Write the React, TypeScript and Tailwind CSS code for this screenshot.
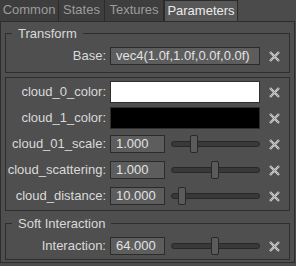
import React from "react";

const Clear = () => (
  <svg width="11" height="11" viewBox="0 0 11 11" className="shrink-0">
    <path d="M1 1L10 10M10 1L1 10" stroke="#cfcfcf" strokeWidth="2.4" />
    <path
      d="M1 1L10 10M10 1L1 10"
      stroke="#7c7c7c"
      strokeWidth="1"
      strokeDasharray="1 1"
    />
  </svg>
);

const Slider = ({ pos }: { pos: number }) => (
  <div className="relative flex items-center w-[89px] h-[18px] ml-[6px]">
    <div className="w-full h-[6px] rounded-[3px] bg-[#393939] border border-[#282828]" />
    <div
      className="absolute top-0 w-[8px] h-[18px] rounded-[2px] bg-[#5b5b5b] border border-[#282828]"
      style={{ left: pos }}
    />
  </div>
);

const Label = ({ text }: { text: string }) => (
  <div className="w-[101px] text-right pr-[1px] mr-[3px] text-[#dadada] whitespace-nowrap">
    {text}
  </div>
);

const ValueRow = ({ label, value, pos }: { label: string; value: string; pos: number }) => (
  <div className="flex items-center h-[22px]">
    <Label text={label} />
    <div className="w-[55px] h-[18px] pl-[5px] leading-[16px] bg-[#5d5d5d] border border-[#2b2b2b] text-[#e2e2e2]">
      {value}
    </div>
    <Slider pos={pos} />
    <div className="ml-[9px]">
      <Clear />
    </div>
  </div>
);

const ColorRow = ({ label, color }: { label: string; color: string }) => (
  <div className="flex items-center h-[22px]">
    <Label text={label} />
    <div className={`w-[150px] h-[22px] border border-[#2e2e2e] ${color}`} />
    <div className="ml-[9px]">
      <Clear />
    </div>
  </div>
);

export default function App() {
  return (
    <div
      className="w-[296px] h-[266px] bg-[#4b4b4b] text-[13px] overflow-hidden"
      style={{ fontFamily: '"Liberation Sans", Arial, sans-serif' }}
    >
      <div className="flex items-end h-[21px]">
        <div className="w-[59px] h-[21px] text-center leading-[20px] bg-[#3e3e3e] border-r border-[#2b2b2b] text-[#9c9c9c]">
          Common
        </div>
        <div className="w-[46px] h-[21px] text-center leading-[20px] bg-[#3e3e3e] border-r border-[#2b2b2b] text-[#9c9c9c]">
          States
        </div>
        <div className="w-[59px] h-[21px] text-center leading-[20px] bg-[#3e3e3e] border-r border-[#2b2b2b] text-[#9c9c9c]">
          Textures
        </div>
        <div className="w-[74px] h-[21px] text-center leading-[20px] bg-[#575757] border-x border-t border-[#2b2b2b] text-[#ececec]">
          Parameters
        </div>
      </div>

      <div className="w-[295px] h-[242px] border border-[#2d2d2d] bg-[#4f4f4f] px-[4px] pt-[4px]">
        <fieldset className="border border-[#2e2e2e] pb-[7px]">
          <legend className="ml-[6px] px-[6px] leading-[15px] text-[#dadada]">Transform</legend>
          <div className="flex items-center h-[18px] mt-[6px]">
            <Label text="Base:" />
            <div className="w-[150px] h-[18px] pl-[5px] leading-[16px] bg-[#5d5d5d] border border-[#2b2b2b] text-[#e2e2e2]">
              vec4(1.0f,1.0f,0.0f,0.0f)
            </div>
            <div className="ml-[9px]">
              <Clear />
            </div>
          </div>
        </fieldset>

        <div className="mt-[4px] border border-[#2e2e2e] pt-[3px] pb-[3px] flex flex-col gap-[4px]">
          <ColorRow label="cloud_0_color:" color="bg-white" />
          <ColorRow label="cloud_1_color:" color="bg-black" />
          <ValueRow label="cloud_01_scale:" value="1.000" pos={19} />
          <ValueRow label="cloud_scattering:" value="1.000" pos={40} />
          <ValueRow label="cloud_distance:" value="10.000" pos={7} />
        </div>

        <fieldset className="mt-[5px] border border-[#2e2e2e] pb-[4px]">
          <legend className="ml-[6px] px-[6px] leading-[15px] text-[#dadada]">Soft Interaction</legend>
          <div className="mt-[6px]">
            <div className="flex items-center h-[18px]">
              <Label text="Interaction:" />
              <div className="w-[55px] h-[18px] pl-[5px] leading-[16px] bg-[#5d5d5d] border border-[#2b2b2b] text-[#e2e2e2]">
                64.000
              </div>
              <Slider pos={40} />
              <div className="ml-[9px]">
                <Clear />
              </div>
            </div>
          </div>
        </fieldset>
      </div>
    </div>
  );
}
